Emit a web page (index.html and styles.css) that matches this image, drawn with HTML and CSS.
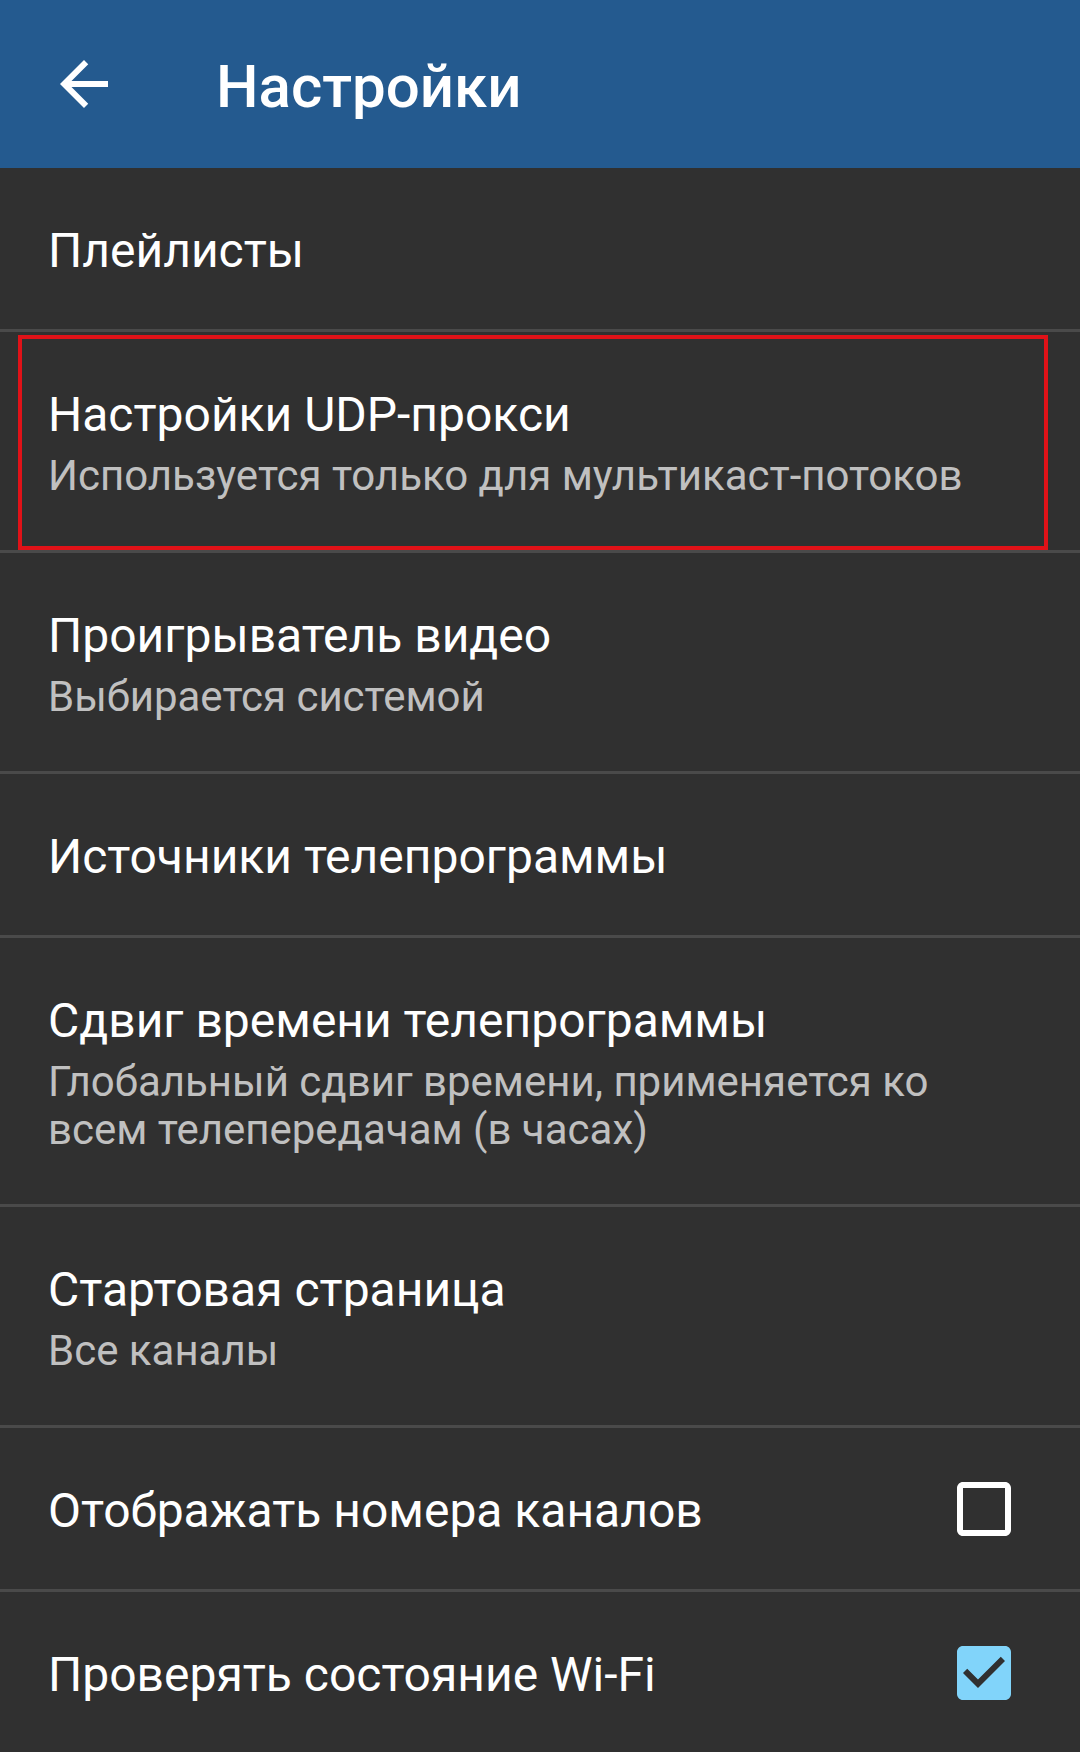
FILE: index.html
```html
<!DOCTYPE html>
<html lang="ru">
<head>
<meta charset="utf-8">
<title>Настройки</title>
<link rel="stylesheet" href="styles.css">
</head>
<body>
<div class="screen">
  <header class="toolbar">
    <div class="nav-btn">
      <svg class="nav-icon" viewBox="0 0 24 24" width="72" height="72"><path fill="#ffffff" d="M20 11H7.83l5.59-5.59L12 4l-8 8 8 8 1.41-1.41L7.83 13H20v-2z"/></svg>
    </div>
    <h1 class="toolbar-title">Настройки</h1>
  </header>
  <main class="prefs">
    <div class="pref">
      <div class="pref-text"><div class="pref-title">Плейлисты</div></div>
    </div>
    <div class="divider"></div>
    <div class="pref pref-marked">
      <div class="pref-text">
        <div class="pref-title">Настройки UDP-прокси</div>
        <div class="pref-summary">Используется только для мультикаст-потоков</div>
      </div>
      <div class="mark"></div>
    </div>
    <div class="divider"></div>
    <div class="pref">
      <div class="pref-text">
        <div class="pref-title">Проигрыватель видео</div>
        <div class="pref-summary">Выбирается системой</div>
      </div>
    </div>
    <div class="divider"></div>
    <div class="pref">
      <div class="pref-text"><div class="pref-title">Источники телепрограммы</div></div>
    </div>
    <div class="divider"></div>
    <div class="pref">
      <div class="pref-text">
        <div class="pref-title">Сдвиг времени телепрограммы</div>
        <div class="pref-summary">Глобальный сдвиг времени, применяется ко всем телепередачам (в часах)</div>
      </div>
    </div>
    <div class="divider"></div>
    <div class="pref">
      <div class="pref-text">
        <div class="pref-title">Стартовая страница</div>
        <div class="pref-summary">Все каналы</div>
      </div>
    </div>
    <div class="divider"></div>
    <div class="pref">
      <div class="pref-text"><div class="pref-title">Отображать номера каналов</div></div>
      <svg class="checkbox" viewBox="0 0 24 24" width="72" height="72"><path fill="#ffffff" d="M19 5v14H5V5h14m0-2H5c-1.1 0-2 .9-2 2v14c0 1.1.9 2 2 2h14c1.1 0 2-.9 2-2V5c0-1.1-.9-2-2-2z"/></svg>
    </div>
    <div class="divider"></div>
    <div class="pref">
      <div class="pref-text"><div class="pref-title">Проверять состояние Wi-Fi</div></div>
      <svg class="checkbox" viewBox="0 0 24 24" width="72" height="72"><path fill="#81d4fa" d="M19 3H5c-1.11 0-2 .9-2 2v14c0 1.1.89 2 2 2h14c1.11 0 2-.9 2-2V5c0-1.1-.89-2-2-2zm-9 14l-5-5 1.41-1.41L10 14.17l7.59-7.59L19 8l-9 9z"/></svg>
    </div>
  </main>
</div>
</body>
</html>
```
FILE: styles.css
```css
html, body {
  margin: 0;
  padding: 0;
  background: #303030;
}

body {
  font-family: Roboto, "Noto Sans", "DejaVu Sans", sans-serif;
  color: #ffffff;
}

.screen {
  width: 1080px;
  height: 1752px;
  overflow: hidden;
  background: #303030;
  display: flex;
  flex-direction: column;
}

.toolbar {
  flex: 0 0 168px;
  height: 168px;
  background: #245a8f;
  display: flex;
  align-items: center;
}

.nav-btn {
  width: 72px;
  height: 72px;
  margin-left: 48px;
  margin-right: 96px;
  display: flex;
}

.nav-icon {
  display: block;
}

.toolbar-title {
  margin: 5px 0 0 0;
  font-size: 60px;
  font-weight: 500;
  line-height: 70px;
  color: #ffffff;
}

.prefs {
  display: flex;
  flex-direction: column;
}

.pref {
  display: flex;
  align-items: center;
  justify-content: space-between;
  padding: 55px 0 50px 48px;
  flex-shrink: 0;
}

.pref-text {
  display: flex;
  flex-direction: column;
  flex: 1 1 auto;
  padding-right: 80px;
}

.pref-title {
  font-size: 48px;
  line-height: 56px;
  color: #ffffff;
}

.pref-summary {
  margin-top: 9px;
  font-size: 42px;
  line-height: 48px;
  color: #c0c0c0;
}

.checkbox {
  flex: 0 0 72px;
  margin: -13px 60px -8px 0;
  display: block;
}

.divider {
  height: 3px;
  flex: 0 0 3px;
  background: #4a4a4a;
}

.pref-marked {
  position: relative;
}

.mark {
  position: absolute;
  top: 3px;
  left: 18px;
  right: 32px;
  bottom: 0;
  border: 4px solid #e01218;
  pointer-events: none;
}
```
